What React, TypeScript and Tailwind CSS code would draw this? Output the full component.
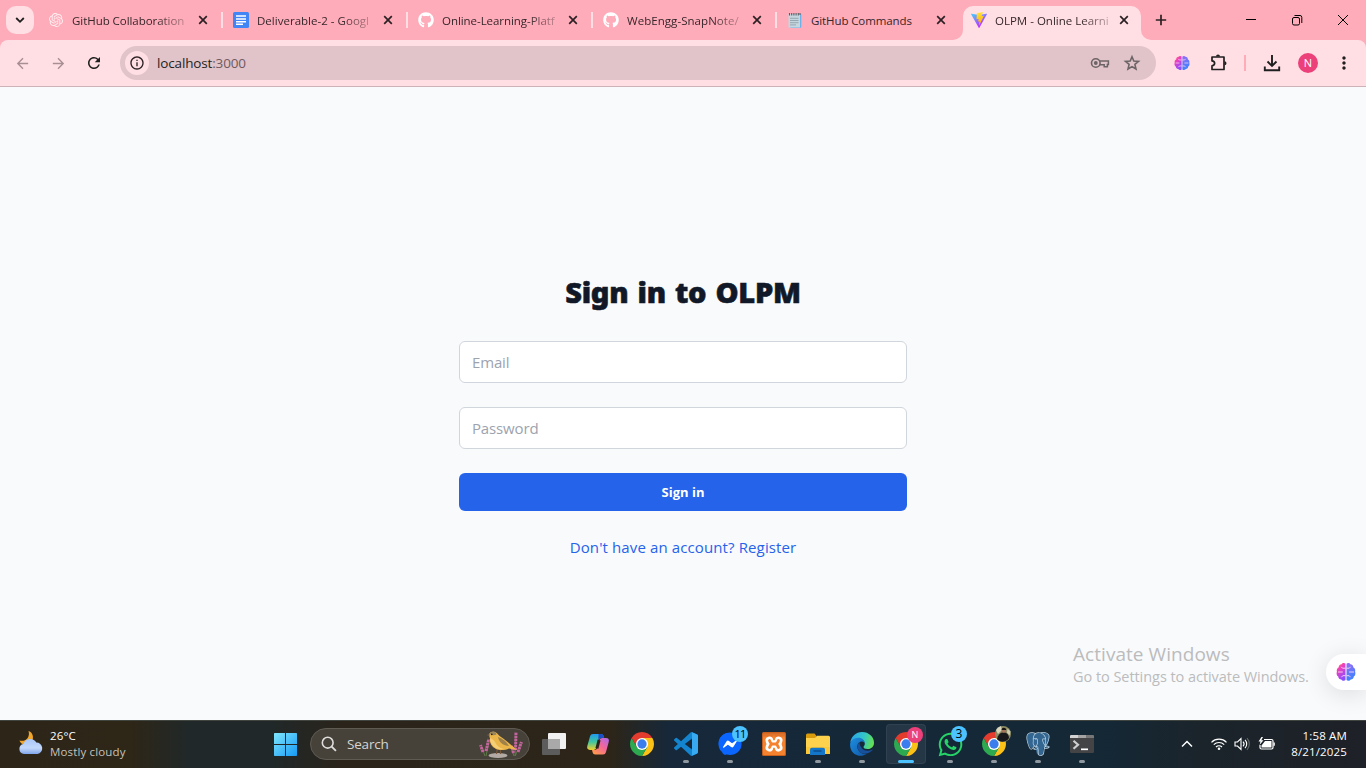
import React from "react";
import { FaGithub, FaWhatsapp, FaFacebookMessenger } from "react-icons/fa";
import { SiOpenai, SiPostgresql } from "react-icons/si";
import { MdArrowBack, MdArrowForward, MdRefresh, MdInfoOutline, MdMoreVert } from "react-icons/md";

const UI = "font-['Open_Sans','Noto_Sans',sans-serif]";

function CloseGlyph() {
  return (
    <svg width="16" height="16" viewBox="0 0 16 16" className="shrink-0">
      <path d="M4.2 4.2l7.6 7.6M11.8 4.2l-7.6 7.6" stroke="#2b2023" strokeWidth="1.7" />
    </svg>
  );
}

function DocsIcon() {
  return (
    <svg width="16" height="16" viewBox="0 0 16 16">
      <rect width="16" height="16" rx="1.5" fill="#4285f4" />
      <path d="M3 4h10M3 7h10M3 9.7h10M3 12.3h7" stroke="#fff" strokeWidth="1.5" />
    </svg>
  );
}

function NotepadIcon() {
  return (
    <svg width="16" height="16" viewBox="0 0 16 16">
      <path d="M13 2l1.3.3V15l-1 1H3z" fill="#6cb2e8" />
      <path d="M1.5 2H13v13.5H1.5z" fill="#c6d6df" />
      <path d="M3 6.3h8.5M3 8.5h8.5M3 10.7h8.5M3 12.9h6" stroke="#8fa3ae" strokeWidth=".9" />
      <path d="M2.500 1v2.500M4.700 1v2.500M6.900 1v2.500M9.100 1v2.500M11.300 1v2.500M13 1v2" stroke="#5c5c63" strokeWidth="1.1" />
    </svg>
  );
}

function ViteIcon() {
  return (
    <svg width="16" height="16" viewBox="0 0 256 257">
      <defs>
        <linearGradient id="viteV" x1="0" y1="0" x2=".6" y2=".85">
          <stop offset="0" stopColor="#41d1ff" />
          <stop offset="1" stopColor="#bd34fe" />
        </linearGradient>
        <linearGradient id="viteB" x1=".4" y1="0" x2=".5" y2="1">
          <stop offset="0" stopColor="#ffea83" />
          <stop offset=".1" stopColor="#ffdd35" />
          <stop offset="1" stopColor="#ffa800" />
        </linearGradient>
      </defs>
      <path fill="url(#viteV)" d="M255.153 37.938L134.897 252.976c-2.483 4.44-8.862 4.466-11.382.048L.875 37.958c-2.746-4.814 1.371-10.646 6.827-9.67l120.385 21.517a6.537 6.537 0 0 0 2.322-.004l117.867-21.483c5.438-.991 9.574 4.796 6.877 9.62Z" />
      <path fill="url(#viteB)" d="M185.432.063L96.44 17.501a3.268 3.268 0 0 0-2.634 3.014l-5.474 92.456a3.268 3.268 0 0 0 3.997 3.378l24.777-5.718c2.318-.535 4.413 1.507 3.936 3.838l-7.361 36.047c-.495 2.426 1.782 4.5 4.151 3.78l15.304-4.649c2.372-.72 4.652 1.36 4.15 3.788l-11.698 56.621c-.732 3.542 3.979 5.473 5.943 2.437l1.313-2.028l72.516-144.72c1.215-2.423-.88-5.186-3.54-4.672l-25.505 4.922c-2.396.462-4.435-1.77-3.759-4.114l16.646-57.705c.677-2.35-1.37-4.583-3.769-4.113Z" />
    </svg>
  );
}

function BrainIcon({ size }: { size: number }) {
  return (
    <svg width={size} height={size} viewBox="0 0 20 20">
      <defs>
        <linearGradient id="brainL" x1="0" y1="0" x2=".5" y2="1">
          <stop offset="0" stopColor="#ff9a3c" />
          <stop offset=".35" stopColor="#f43fb8" />
          <stop offset="1" stopColor="#8b4dff" />
        </linearGradient>
        <linearGradient id="brainR" x1="0" y1="0" x2=".3" y2="1">
          <stop offset="0" stopColor="#9a6cf5" />
          <stop offset="1" stopColor="#3b82ff" />
        </linearGradient>
      </defs>
      <path fill="url(#brainL)" d="M9.5 1.8C8.6.8 6.3.8 5.6 2.3 3.9 2.3 2.5 3.7 2.8 5.3 1 6.2.4 8 .9 9.7.2 11.5.7 13.5 2.2 14.5c.1 1.8 1.5 3 3.1 3 .9 1.6 3.3 1.7 4.2.5z" />
      <path fill="url(#brainR)" d="M10.5 1.8c.9-1 3.2-1 3.9.5 1.7 0 3.1 1.4 2.8 3 1.8.9 2.4 2.7 1.9 4.4.7 1.8.2 3.8-1.3 4.8-.1 1.8-1.500 3-3.100 3-.9 1.600-3.300 1.700-4.200.5z" />
      <path d="M9.500 6.200H6.500L5.200 4.800M2 10h4.800M9.500 13.700H6.800l-1.300 1.500M10.500 6.200h2.800l1.300-1.400M13 10h5M10.500 13.700h2.700l1.300 1.500" stroke="#ffd9f4" strokeWidth=".9" fill="none" />
    </svg>
  );
}

function ChromeIcon({ size = 24 }: { size?: number }) {
  return (
    <svg width={size} height={size} viewBox="-24 -24 48 48">
      <path fill="#e33b2e" d="M-20.78-12A24 24 0 0 1 20.78-12L0-12L0 0L-10.39 6Z" />
      <path fill="#fbc116" d="M20.78-12A24 24 0 0 1 0 24L10.39 6L0 0L0-12Z" />
      <path fill="#2da94f" d="M0 24A24 24 0 0 1-20.78-12L-10.39 6L0 0L10.39 6Z" />
      <circle r="12" fill="#fff" />
      <circle r="9.3" fill="#3b7ded" />
    </svg>
  );
}

function CopilotIcon() {
  return (
    <svg width="24" height="24" viewBox="0 0 24 24">
      <defs>
        <linearGradient id="coA" x1="0" y1="0" x2="0" y2="1">
          <stop offset="0" stopColor="#1f9bf0" />
          <stop offset=".5" stopColor="#3fc6a0" />
          <stop offset="1" stopColor="#f2d02c" />
        </linearGradient>
        <linearGradient id="coB" x1="1" y1="0" x2=".2" y2="1">
          <stop offset="0" stopColor="#a96bf2" />
          <stop offset=".5" stopColor="#f2669a" />
          <stop offset="1" stopColor="#ff9a4c" />
        </linearGradient>
      </defs>
      <path fill="url(#coA)" d="M7 2h8c1.500 0 2.100.8 2.600 2.200L18.200 6h-3c-1.700 0-2.500.9-2.900 2.500L10.600 15c-.5 1.900-1.500 2.900-3.300 2.900H4C1.600 17.900.7 16.300 1.300 14L4 4.500C4.500 2.800 5.400 2 7 2z" />
      <path fill="#1d4fc4" d="M12.500 2h2.600c1.500 0 2.100.8 2.600 2.200L18.200 6h-3c-1.700 0-2.500.9-2.900 2.500z" />
      <path fill="url(#coB)" d="M17 22.500H9.300c-1.500 0-2.200-.8-2.700-2.200L6 18h2.400c1.800 0 2.800-1 3.300-2.900L13.400 8.500C13.800 6.900 14.600 6 16.300 6H20c2.400 0 3.400 1.600 2.700 4L20 20c-.5 1.700-1.400 2.500-3 2.500z" />
      <path d="M13.100 8l-2.200 8.400" stroke="#2b2318" strokeWidth="3" />
    </svg>
  );
}

function VsCodeIcon() {
  return (
    <svg width="24" height="24" viewBox="0 0 24 24">
      <path fill="#1484cf" d="M23.15 2.587L18.21.21a1.494 1.494 0 0 0-1.705.29l-9.46 8.63-4.12-3.128a.999.999 0 0 0-1.276.057L.327 7.261A1 1 0 0 0 .326 8.74L3.899 12 .326 15.26a1 1 0 0 0 .001 1.479L1.65 17.94a.999.999 0 0 0 1.276.057l4.12-3.128 9.46 8.63a1.492 1.492 0 0 0 1.704.29l4.942-2.377A1.5 1.5 0 0 0 24 20.06V3.939a1.5 1.5 0 0 0-.85-1.352zm-5.146 14.861L10.826 12l7.178-5.448v10.896z" />
      <path fill="#37aaf2" d="M18 .2l5.150 2.387A1.500 1.500 0 0 1 24 3.940v16.120a1.500 1.500 0 0 1-.85 1.352L18 23.800z" />
    </svg>
  );
}

function XamppIcon() {
  return (
    <svg width="24" height="24" viewBox="0 0 24 24">
      <rect width="24" height="24" rx="1.5" fill="#c85f1c" />
      <rect x="1" y="1.5" width="22" height="21.5" rx="1" fill="#f5822f" />
      <path d="M1 1h22v3.500H1z" fill="#d3692a" opacity=".6" />
      <g fill="none" strokeLinecap="round" strokeLinejoin="round">
        <path d="M7.500 8.500c1.200 3.500 1.200 4 0 7M16.500 8.500c-1.200 3.500-1.200 4 0 7M8.500 12h7" stroke="#fff" strokeWidth="8" />
        <path d="M7.500 8.500c1 2.600 1.600 3.500 3 3.500h3c1.400 0 2-.9 3-3.500M7.500 15.500c1-2.600 1.600-3.500 3-3.500M16.500 15.500c-1-2.600-1.600-3.500-3-3.500" stroke="#f5822f" strokeWidth="2.8" />
      </g>
      <path d="M12 3.500v4.800M12 20.500v-4.800" stroke="#f5822f" strokeWidth="1.6" />
    </svg>
  );
}

function FolderIcon() {
  return (
    <svg width="26" height="24" viewBox="0 0 26 24">
      <path fill="#d99a0b" d="M1 3a1.500 1.500 0 0 1 1.500-1.500h7L11.500 4v4H1z" />
      <path fill="#ffd24d" d="M1 6h9l2-2.200h11.500A1.500 1.500 0 0 1 25 5.300V22H1z" />
      <path fill="#f9c22f" d="M1 15h24v7H1z" opacity=".6" />
      <path fill="#1476c8" d="M5 23v-5.500A1.800 1.800 0 0 1 6.800 15.700h11.400a1.800 1.800 0 0 1 1.800 1.800V23z" />
      <path d="M8.500 19h8" stroke="#0a4f91" strokeWidth="1.5" />
    </svg>
  );
}

function EdgeIcon() {
  return (
    <svg width="24" height="24" viewBox="0 0 24 24">
      <defs>
        <linearGradient id="edT" x1="0" y1=".3" x2="1" y2=".5">
          <stop offset="0" stopColor="#2aa6e8" />
          <stop offset=".55" stopColor="#33c6c8" />
          <stop offset="1" stopColor="#66e04f" />
        </linearGradient>
        <linearGradient id="edB" x1="0" y1="0" x2="1" y2="1">
          <stop offset="0" stopColor="#1e8fe0" />
          <stop offset="1" stopColor="#0f57a8" />
        </linearGradient>
      </defs>
      <path fill="url(#edT)" d="M.3 10.500C1.200 4.600 6 0 12 0c7 0 12 5 12 10.700 0 4-3 6.300-6.500 6.300-2.600 0-4-1-4-2 0-.8 1.300-1.300 1.300-3.200C14.800 8.800 12 6.700 8.600 6.700 4.400 6.700 1.500 9 .3 10.500z" />
      <path fill="url(#edB)" d="M.1 12.500C.1 9 3.500 5.700 8.300 5.700c4 0 6.400 2.600 6.500 5.500-1-1.400-2.700-2-4.400-1.500-2.700.8-3.800 4.300-2.500 7.600 1.400 3.500 5 5.400 8.600 4.700C10 26.300 0 22.500.1 12.500z" />
      <path fill="#17509b" d="M9.800 10.100C7.300 12 7 16 9 19c2.700 3.800 8.500 3.800 13.500-.8.300-.3 0-.8-.5-.5-3.500 1.800-7.600 1.200-9.900-1.200-2-2-2.800-4.700-2.300-6.400z" />
    </svg>
  );
}

function PostgresIcon() {
  return (
    <svg width="24" height="24" viewBox="0 0 24 24">
      <path fill="#336791" d="M5 1C1.500 1 .5 4 1 7.500 1.500 11 3.500 16 5.500 16c1 0 2-1.500 2.500-1.500.8 0 1.200.8 2 1 0 4 .5 8 4 8 3 0 3.500-3 3.600-7.500 2.500 0 5-1 5-2 0-.6-1-.5-1.500-.7C22.500 10.500 24 6 23 3.500 21.500.5 17 .5 15 1.200 11.500.5 9.500 1.500 8.500 1.800 7.500 1.300 6.500 1 5 1z" />
      <SiPostgresql size={24} color="#b9d0e2" />
    </svg>
  );
}

function TerminalIcon() {
  return (
    <svg width="24" height="18" viewBox="0 0 24 18">
      <rect width="24" height="18" rx="1.2" fill="#444446" />
      <path d="M0 3V1.200A1.200 1.200 0 0 1 1.200 0H8v3z" fill="#d2d2d2" />
      <path d="M8 0h8v3H8z" fill="#a4a4a4" />
      <path d="M16 0h6.800A1.200 1.200 0 0 1 24 1.200V3h-8z" fill="#777" />
      <path d="M3.500 5.700l4.500 4-4.500 4" stroke="#cfcfcf" strokeWidth="2.2" fill="none" />
      <path d="M11 14.300h7" stroke="#fff" strokeWidth="1.7" />
    </svg>
  );
}

function TaskViewIcon() {
  return (
    <svg width="24" height="24" viewBox="0 0 24 24">
      <rect x="6" y="1" width="18" height="16" rx="1" fill="#f1f1f1" />
      <rect x="0" y="7" width="18" height="16" rx="1" fill="#5c5c5c" />
      <path d="M6 7h12v10H6z" fill="#a9a9a9" />
    </svg>
  );
}

function WeatherIcon() {
  return (
    <svg width="26" height="26" viewBox="0 0 26 26">
      <defs>
        <linearGradient id="cloud" x1="0" y1="0" x2="0" y2="1">
          <stop offset="0" stopColor="#a9c6f8" />
          <stop offset=".6" stopColor="#c3d8fb" />
          <stop offset="1" stopColor="#7fa6ec" />
        </linearGradient>
      </defs>
      <path fill="#f0a52b" d="M10.500 1c3.500 1 5.500 5 4 9.500-1 3-4.500 5-8 4.500C4 14.500 2 12.500 1.500 10.500c3 .8 6 .2 7.800-2C11.100 6.300 11.300 3.500 10.500 1z" />
      <path fill="url(#cloud)" d="M6 24a5 5 0 0 1-.5-9.900A7 7 0 0 1 18.300 12.500 5.800 5.800 0 0 1 19.500 24z" />
    </svg>
  );
}

function BirdArt() {
  return (
    <svg width="46" height="28" viewBox="0 0 46 28">
      <g stroke="#5f7a48" strokeWidth="1" fill="none">
        <path d="M7 26L3 15M8 26l3-14M37 26l1-20M37 26l6-12M36 26l-3-10" />
      </g>
      <g stroke="#c4649c" strokeWidth="3" strokeDasharray="2.4 .6" fill="none">
        <path d="M5 22L2.500 15M8 21l2.800-12M37.500 20l.5-18M40 22l3.500-10M35.500 23l-2-7" />
      </g>
      <ellipse cx="20" cy="25.5" rx="9.5" ry="2.5" fill="#b3aaa6" />
      <path d="M19.500 18l-1 6M22.500 18v6" stroke="#7b5638" strokeWidth="1.2" />
      <path fill="#ebb649" d="M11 5C11.500 2 14.500 1 17.500 2.200c2.500 1.200 2.800 3.200 5.500 4.800 5 3 9 7.500 16 13l-8-1.500c-3 1.500-8 2.200-11.500 1-4.500-1.600-8.300-5.500-7.500-11z" />
      <path fill="#f5cf78" d="M12 8c2 1 4 2 5.500 5s4 4.800 8 6c-7 1.500-13.500-3.500-13.500-11z" />
      <path fill="#9f8149" d="M20 7c5 1.500 8.500 4.500 11 9-5.500-.5-10-3.500-11-9z" />
      <path fill="#9b8659" d="M11.500 3.800C13 .6 18 .8 18.500 4.500c-2 1.200-5 .8-7-.7z" />
      <path fill="#6f5a45" d="M11.500 4L8.500 5l3 1z" />
      <circle cx="13.8" cy="4.4" r=".8" fill="#1c1611" />
    </svg>
  );
}

type TabProps = { icon: React.ReactNode; title: string; wide?: boolean; sep?: boolean; text?: string; fade?: boolean };

function Tab({ icon, title, wide, sep = true, text = "tracking-[-0.1px]", fade = true }: TabProps) {
  return (
    <div className={`flex h-[34px] items-center pl-2 pr-0.5 -mt-px ${wide ? "w-[185px]" : "w-[184px]"}`}>
      <span className="flex w-4 shrink-0 justify-center">{icon}</span>
      <span className={`ml-2 mt-0.5 min-w-0 flex-1 whitespace-nowrap text-[11.5px] leading-4 text-[#35262a] ${text}`}>
        <span className={fade ? "inline-block [mask-image:linear-gradient(to_right,black_75%,rgba(0,0,0,.3)_100%)]" : ""}>{title}</span>
      </span>
      <span className="ml-[9px] mr-[10px] flex"><CloseGlyph /></span>
      <span className={`h-4 w-0.5 ${sep ? "bg-[#ffdfe4]" : ""}`} />
    </div>
  );
}

function TaskButton({ children, running, active }: { children: React.ReactNode; running?: boolean; active?: boolean }) {
  return (
    <div className="flex h-12 w-11 shrink-0 items-center justify-center">
      <div className={`relative flex h-10 w-10 items-center justify-center rounded ${active ? "bg-white/[0.07] ring-1 ring-inset ring-white/5" : ""}`}>
        {children}
        {running && <span className="absolute bottom-px left-[17px] h-[3px] w-1.5 rounded-full bg-[#90989f]" />}
        {active && <span className="absolute bottom-px left-3 h-[3px] w-4 rounded-full bg-[#4cc2ff]" />}
      </div>
    </div>
  );
}

export default function App() {
  return (
    <div className={`flex h-[768px] w-[1366px] flex-col overflow-hidden bg-[#f9fafc] ${UI}`}>
      <header className="bg-[#ffacba]">
        <div className="flex h-10 pt-1.5">
          <button className="ml-1.5 mr-1.5 flex h-7 w-7 items-center justify-center rounded-[10px] bg-[#ffdfe4]">
            <svg width="12" height="12" viewBox="0 0 12 12"><path d="M2.200 4l3.800 3.800L9.800 4" stroke="#1f1f1f" strokeWidth="1.8" fill="none" /></svg>
          </button>
          <div className="-mt-[2px] flex">
            <Tab wide icon={<SiOpenai size={14} color="#ffeef1" />} title="GitHub Collaboration" text="tracking-[-0.05px]" />
            <Tab wide icon={<DocsIcon />} title="Deliverable-2 - Googl" text="tracking-[0.02px]" />
            <Tab wide icon={<FaGithub size={16} color="#fff" />} title="Online-Learning-Platf" text="tracking-[-0.05px]" />
            <Tab icon={<FaGithub size={16} color="#fff" />} title="WebEngg-SnapNote/" text="tracking-[0.05px]" />
            <Tab icon={<NotepadIcon />} title="GitHub Commands" sep={false} fade={false} />
          </div>
          <div className="relative flex h-[34px] w-[178px] items-center rounded-t-[10px] bg-[#ffdfe4] pl-2 pr-2">
            <svg className="absolute -left-2.5 bottom-0" width="10" height="10"><path d="M10 0v10H0A10 10 0 0 0 10 0z" fill="#ffdfe4" /></svg>
            <svg className="absolute -right-2.5 bottom-0" width="10" height="10"><path d="M0 0v10h10A10 10 0 0 1 0 0z" fill="#ffdfe4" /></svg>
            <span className="-mt-1.5"><ViteIcon /></span>
            <span className="-mt-1 ml-2 min-w-0 flex-1 whitespace-nowrap text-[11.5px] leading-4 text-[#35262a]">
              <span className="inline-block [mask-image:linear-gradient(to_right,black_75%,rgba(0,0,0,.3)_100%)]">OLPM - Online Learni</span>
            </span>
            <span className="-mt-1.5 ml-[9px] mr-px flex"><CloseGlyph /></span>
          </div>
          <div className="ml-3 mt-[6px]">
            <svg width="16" height="16" viewBox="0 0 16 16"><path d="M8 2.800v10.400M2.800 8h10.400" stroke="#2b2023" strokeWidth="1.7" /></svg>
          </div>
          <div className="ml-auto mr-[17px] mt-2 flex gap-[34px]">
            <svg width="12" height="12" viewBox="0 0 12 12"><path d="M1 5.500h10" stroke="#000" /></svg>
            <svg width="12" height="12" viewBox="0 0 12 12"><rect x="1.5" y="3.5" width="7" height="7.5" rx="1.5" fill="none" stroke="#000" /><path d="M3.500 1.500H9A1.800 1.800 0 0 1 10.800 3.300V9" fill="none" stroke="#000" /></svg>
            <svg width="12" height="12" viewBox="0 0 12 12"><path d="M1 1l10 10M11 1L1 11" stroke="#000" /></svg>
          </div>
        </div>
        <div className="flex h-[47px] items-center rounded-t-lg border-b border-[#cdb3b8] bg-[#ffdfe4] pl-3.5">
          <MdArrowBack size={17} color="#a88f94" />
          <MdArrowForward size={17} color="#a88f94" className="ml-[19px]" />
          <MdRefresh size={18} color="#1f1f1f" className="ml-[18px]" />
          <div className="ml-[17px] flex h-[34px] w-[1036px] items-center rounded-full bg-[#e0c4c9] pl-[5px]">
            <span className="flex h-6 w-6 items-center justify-center rounded-full bg-[#ffdfe4]"><MdInfoOutline size={16} color="#2b2023" /></span>
            <span className="ml-2 text-[13.5px] leading-5 tracking-[-0.15px] text-[#1f1f1f]">localhost<span className="text-[#71595e]">:3000</span></span>
            <svg className="ml-auto" width="20" height="16" viewBox="0 0 20 16">
              <circle cx="5.8" cy="8" r="4.3" fill="none" stroke="#6d6467" strokeWidth="1.6" />
              <circle cx="5.8" cy="8" r="1.9" fill="#6d6467" />
              <path d="M10 6h8.400v3.600h-1v2.200h-3.200V9.800H10" fill="none" stroke="#6d6467" strokeWidth="1.5" />
            </svg>
            <svg className="ml-[13px] mr-[15px]" width="18" height="18" viewBox="0 0 18 18">
              <path d="M9 2.700l1.800 4.300 4.700.4-3.600 3 1.100 4.600L9 12.600 5 15l1.100-4.600-3.600-3 4.700-.4z" fill="none" stroke="#6d6467" strokeWidth="1.6" />
            </svg>
          </div>
          <span className="ml-[18px]"><BrainIcon size={16} /></span>
          <svg className="ml-[19px]" width="20" height="20" viewBox="0 0 20 20">
            <path d="M3 4h12v12.500H3v-3.700c3.500-.3 3.500-4.600 0-4.900z" fill="none" stroke="#1f1f1f" strokeWidth="1.7" strokeLinejoin="round" />
            <path d="M7 3.500a2 2 0 0 1 4 0zM15.500 8.300a2 2 0 0 1 0 4z" fill="#1f1f1f" />
          </svg>
          <span className="ml-[15px] h-4 w-0.5 bg-[#ffacba]" />
          <svg className="ml-[17px]" width="18" height="18" viewBox="0 0 18 18">
            <path d="M9 1v10.500M4.500 7.500L9 12l4.500-4.500M1.800 12.500v3.800h14.400v-3.800" fill="none" stroke="#1f1f1f" strokeWidth="1.9" />
          </svg>
          <span className="ml-[17px] flex h-5 w-5 items-center justify-center rounded-full bg-[#ec407a] text-[11px] text-white">N</span>
          <MdMoreVert size={20} color="#1f1f1f" className="ml-4" />
        </div>
      </header>

      <main className="relative flex-1 pt-[187px]">
        <div className="mx-auto flex w-[448px] flex-col items-center">
          <h1 className="font-['Noto_Sans','Open_Sans',sans-serif] text-[29px] font-black leading-9 tracking-[-0.3px] text-[#111827] [-webkit-text-stroke:0.6px_#111827] [word-spacing:2px]">Sign in to OLPM</h1>
          <input className="mt-[31px] h-[42px] w-full rounded-md border border-gray-300 bg-white px-3 text-[15px] tracking-[-0.15px] placeholder:text-[#9ca3af]" placeholder="Email" />
          <input className="mt-6 h-[42px] w-full rounded-md border border-gray-300 bg-white px-3 text-[15px] tracking-[-0.15px] placeholder:text-[#9ca3af]" placeholder="Password" />
          <button className="mt-6 h-[38px] w-full rounded-md bg-[#2563eb] pt-px text-[13px] font-bold text-white">Sign in</button>
          <a className="mt-6 text-[15px] leading-6 tracking-[0.12px] text-[#2563eb]">Don&apos;t have an account? Register</a>
        </div>
        <div className="absolute left-[1073px] top-[554px] whitespace-nowrap text-[#bbbcbd]">
          <p className="text-[19px] leading-[26px] tracking-[0.05px]">Activate Windows</p>
          <p className="text-[14.5px] leading-5 tracking-[-0.05px]">Go to Settings to activate Windows.</p>
        </div>
        <div className="absolute right-0 top-[567px] flex h-9 w-10 items-center rounded-l-full bg-white pl-2.5 shadow-[0_4px_24px_rgba(0,0,0,0.12)]">
          <BrainIcon size={20} />
        </div>
      </main>

      <footer className="relative z-10 flex h-12 border-t border-[#40463f] bg-[linear-gradient(to_right,#2d2518_0px,#2e2617_130px,#202829_190px,#202829_270px,#2a241b_340px,#2d2518_610px,#16283a_670px,#142836_1100px,#1b242b_1200px,#1e2127_1366px)]">
        <div className="-mt-px flex h-12 w-full items-center">
          <div className="ml-[18px] mt-[-3px]"><WeatherIcon /></div>
          <div className="ml-1.5 w-[200px] whitespace-nowrap text-[11.5px] leading-4 tracking-[0.15px]">
            <p className="text-white">26°C</p>
            <p className="text-[#c4c2bd]">Mostly cloudy</p>
          </div>
          <svg className="ml-6" width="23" height="23" viewBox="0 0 23 23">
            <defs>
              <linearGradient id="win" x1="0" y1="0" x2="1" y2="1"><stop offset="0" stopColor="#7fe6fd" /><stop offset="1" stopColor="#169af5" /></linearGradient>
            </defs>
            <path fill="url(#win)" d="M0 .7A.7.7 0 0 1 .7 0H11v11H0zM12 0h10.300a.7.7 0 0 1 .7.7V11H12zM0 12h11v11H.7a.7.7 0 0 1-.7-.7zM12 12h11v10.300a.7.700 0 0 1-.7.7H12z" />
          </svg>
          <div className="ml-[13px] flex h-8 w-[220px] items-center rounded-full border border-[#5f5b53] bg-[#46423a] pl-[10px]">
            <svg width="16" height="16" viewBox="0 0 16 16"><circle cx="6.7" cy="6.7" r="5.4" fill="none" stroke="#dedddb" strokeWidth="1.6" /><path d="M10.700 10.700l4.200 4.200" stroke="#dedddb" strokeWidth="1.9" /></svg>
            <span className="ml-[10px] text-[13.5px] leading-5 tracking-[-0.2px] text-[#d6d4d0]">Search</span>
            <span className="ml-auto mr-[5px]"><BirdArt /></span>
          </div>
          <div className="ml-0.5 flex">
            <TaskButton><TaskViewIcon /></TaskButton>
            <TaskButton><CopilotIcon /></TaskButton>
            <TaskButton><ChromeIcon /></TaskButton>
            <TaskButton running><VsCodeIcon /></TaskButton>
            <TaskButton running>
              <FaFacebookMessenger size={24} color="#0a66ff" className="rounded-full bg-[radial-gradient(circle,white_45%,transparent_46%)]" />
              <span className="absolute left-[22px] top-0.5 flex h-4 w-4 items-center justify-center rounded-full bg-[#4cc2ff] text-[11px] tracking-[-0.8px] text-black">11</span>
            </TaskButton>
            <TaskButton><XamppIcon /></TaskButton>
            <TaskButton running><FolderIcon /></TaskButton>
            <TaskButton running><EdgeIcon /></TaskButton>
            <TaskButton active>
              <ChromeIcon />
              <span className="absolute left-[21px] top-[3px] flex h-4 w-4 items-center justify-center rounded-full bg-[#ec407a] text-[9px] text-white">N</span>
            </TaskButton>
            <TaskButton running>
              <FaWhatsapp size={27} color="#25d366" />
              <span className="absolute left-[21px] top-0.5 flex h-4 w-4 items-center justify-center rounded-full bg-[#4cc2ff] text-[12px] text-black">3</span>
            </TaskButton>
            <TaskButton running>
              <ChromeIcon />
              <svg className="absolute left-[21px] top-0.5" width="16" height="16" viewBox="0 0 16 16">
                <circle cx="8" cy="8" r="8" fill="#8c8a62" />
                <path d="M1 4a8 8 0 0 1 5-4l1 4-4 4z" fill="#d8d6bd" />
                <path d="M2 13c1-4 3-6 5-6.500h3c2 .5 4 2.500 4 5.500l-1.500 2a8 8 0 0 1-9 .5z" fill="#18181c" />
                <path d="M12.500 2.500l3 3-1 4-2.500-3z" fill="#cfcdb4" />
                <circle cx="8.8" cy="4.5" r="2.2" fill="#a5745c" />
                <path d="M6.500 4c0-3 4.500-3 4.700 0z" fill="#17130f" />
              </svg>
            </TaskButton>
            <TaskButton running><PostgresIcon /></TaskButton>
            <TaskButton running><TerminalIcon /></TaskButton>
          </div>
          <svg className="ml-[77px]" width="12" height="12" viewBox="0 0 12 12"><path d="M1 8.500l5-5 5 5" fill="none" stroke="#fff" strokeWidth="1.5" /></svg>
          <svg className="ml-[18px]" width="16" height="14" viewBox="0 0 16 14" fill="none" stroke="#fff" strokeWidth="1.2">
            <path d="M.5 5.300a10.500 10.500 0 0 1 15 0M2.800 7.700a7.300 7.300 0 0 1 10.400 0M5 10a4.300 4.300 0 0 1 6 0" />
            <circle cx="8" cy="11.7" r="1.3" fill="#fff" stroke="none" />
          </svg>
          <svg className="ml-[7px]" width="17" height="14" viewBox="0 0 17 14" fill="none" stroke="#fff" strokeWidth="1.1">
            <path d="M1 5h2.500L7 1.500v11L3.500 9H1z" />
            <path d="M9 4.700a3.300 3.300 0 0 1 0 4.600M11 2.800a6 6 0 0 1 0 8.400" />
            <path d="M13 1.200a8.500 8.500 0 0 1 0 11.600" stroke="#62686d" />
          </svg>
          <svg className="ml-[7px]" width="18" height="14" viewBox="0 0 18 14">
            <path d="M6 2.500h7.500A1.500 1.500 0 0 1 15 4v6.500A1.500 1.500 0 0 1 13.500 12h-10A1.500 1.500 0 0 1 2 10.500V8" fill="none" stroke="#fff" strokeWidth="1.2" />
            <path d="M7 4h6.500v6.500h-10V8.500zM15.500 5.500h1.300v3.200h-1.300zM3.500 0L.5 4.500h2L1.500 8 5.500 3.200H3.300L5 0z" fill="#fff" />
          </svg>
          <div className="ml-auto mr-[19px] whitespace-nowrap text-right text-[11.5px] leading-4 tracking-[0.15px] text-white">
            <p>1:58 AM</p>
            <p>8/21/2025</p>
          </div>
        </div>
      </footer>
    </div>
  );
}
